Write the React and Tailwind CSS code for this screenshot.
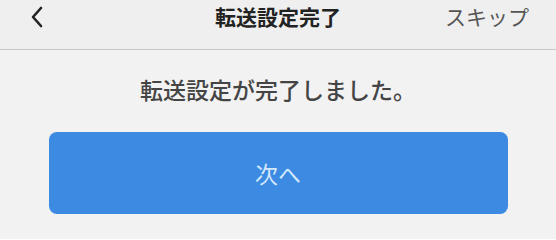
import React from 'react'

const jp = { fontFamily: '"Noto Sans CJK JP", "Noto Sans", sans-serif' }

function BackIcon() {
  return (
    <svg width="14" height="22" viewBox="0 0 14 22" fill="none">
      <path d="M11 2 L3 11 L11 20" stroke="#222" strokeWidth="2.6" strokeLinecap="round" strokeLinejoin="round" />
    </svg>
  )
}

export default function App() {
  return (
    <div className="w-[556px] h-[239px] bg-[#f2f2f2] overflow-hidden" style={jp}>
      <header className="relative h-[50px] bg-[#efefef] border-b border-[#c8c8c8] flex justify-center pt-[6px]">
        <button className="absolute left-[30px] top-[6px]">
          <BackIcon />
        </button>
        <h1 className="text-[21px] font-bold text-[#222] leading-none">転送設定完了</h1>
        <span className="absolute right-[27px] top-[6px] text-[21px] text-[#555] leading-none">スキップ</span>
      </header>
      <main className="flex flex-col items-center pt-[28px]">
        <p className="text-[23px] text-[#444] font-medium leading-none">転送設定が完了しました。</p>
        <button className="mt-[31px] w-[459px] h-[82px] rounded-[8px] bg-[#3d8ae3] text-[#d3e8fb] text-[23px]">
          次へ
        </button>
      </main>
    </div>
  )
}
